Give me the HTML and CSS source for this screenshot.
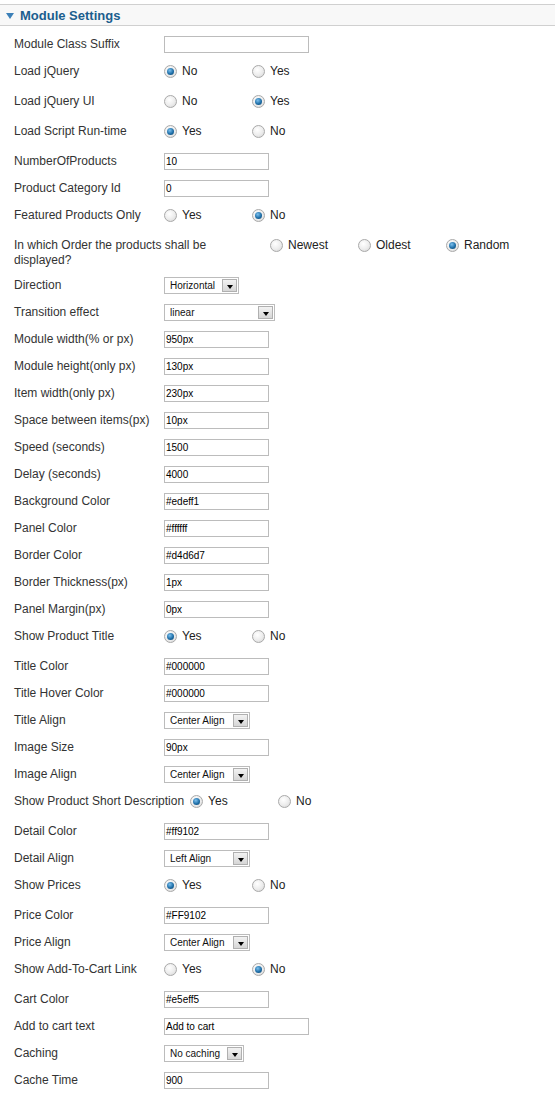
FILE: index.html
```html
<!DOCTYPE html>
<html>
<head>
<meta charset="utf-8">
<link rel="stylesheet" href="styles.css">
</head>
<body>
<div class="panel">
  <div class="head"><span class="tri"></span><span class="title">Module Settings</span></div>
  <div class="list">
    <div class="row"><span class="key">Module Class Suffix</span><span class="inp wide"></span></div>
    <div class="row r"><span class="key">Load jQuery</span><span class="opt"><i class="rd on"></i>No</span><span class="opt"><i class="rd"></i>Yes</span></div>
    <div class="row r"><span class="key">Load jQuery UI</span><span class="opt"><i class="rd"></i>No</span><span class="opt"><i class="rd on"></i>Yes</span></div>
    <div class="row r"><span class="key">Load Script Run-time</span><span class="opt"><i class="rd on"></i>Yes</span><span class="opt"><i class="rd"></i>No</span></div>
    <div class="row"><span class="key">NumberOfProducts</span><span class="inp">10</span></div>
    <div class="row"><span class="key">Product Category Id</span><span class="inp">0</span></div>
    <div class="row r"><span class="key">Featured Products Only</span><span class="opt"><i class="rd"></i>Yes</span><span class="opt"><i class="rd on"></i>No</span></div>
    <div class="row order"><span class="key">In which Order the products shall be displayed?</span><span class="opts"><span class="opt"><i class="rd"></i>Newest</span><span class="opt"><i class="rd"></i>Oldest</span><span class="opt"><i class="rd on"></i>Random</span></span></div>
    <div class="row"><span class="key">Direction</span><span class="sel w75"><span class="val">Horizontal</span><span class="arr"></span></span></div>
    <div class="row"><span class="key">Transition effect</span><span class="sel w111"><span class="val">linear</span><span class="arr"></span></span></div>
    <div class="row"><span class="key">Module width(% or px)</span><span class="inp">950px</span></div>
    <div class="row"><span class="key">Module height(only px)</span><span class="inp">130px</span></div>
    <div class="row"><span class="key">Item width(only px)</span><span class="inp">230px</span></div>
    <div class="row"><span class="key">Space between items(px)</span><span class="inp">10px</span></div>
    <div class="row"><span class="key">Speed (seconds)</span><span class="inp">1500</span></div>
    <div class="row"><span class="key">Delay (seconds)</span><span class="inp">4000</span></div>
    <div class="row"><span class="key">Background Color</span><span class="inp">#edeff1</span></div>
    <div class="row"><span class="key">Panel Color</span><span class="inp">#ffffff</span></div>
    <div class="row"><span class="key">Border Color</span><span class="inp">#d4d6d7</span></div>
    <div class="row"><span class="key">Border Thickness(px)</span><span class="inp">1px</span></div>
    <div class="row"><span class="key">Panel Margin(px)</span><span class="inp">0px</span></div>
    <div class="row r"><span class="key">Show Product Title</span><span class="opt"><i class="rd on"></i>Yes</span><span class="opt"><i class="rd"></i>No</span></div>
    <div class="row"><span class="key">Title Color</span><span class="inp">#000000</span></div>
    <div class="row"><span class="key">Title Hover Color</span><span class="inp">#000000</span></div>
    <div class="row"><span class="key">Title Align</span><span class="sel w86"><span class="val">Center Align</span><span class="arr"></span></span></div>
    <div class="row"><span class="key">Image Size</span><span class="inp">90px</span></div>
    <div class="row"><span class="key">Image Align</span><span class="sel w86"><span class="val">Center Align</span><span class="arr"></span></span></div>
    <div class="row r"><span class="key">Show Product Short Description</span><span class="opt"><i class="rd on"></i>Yes</span><span class="opt"><i class="rd"></i>No</span></div>
    <div class="row"><span class="key">Detail Color</span><span class="inp">#ff9102</span></div>
    <div class="row"><span class="key">Detail Align</span><span class="sel w86"><span class="val">Left Align</span><span class="arr"></span></span></div>
    <div class="row r"><span class="key">Show Prices</span><span class="opt"><i class="rd on"></i>Yes</span><span class="opt"><i class="rd"></i>No</span></div>
    <div class="row"><span class="key">Price Color</span><span class="inp">#FF9102</span></div>
    <div class="row"><span class="key">Price Align</span><span class="sel w86"><span class="val">Center Align</span><span class="arr"></span></span></div>
    <div class="row r"><span class="key">Show Add-To-Cart Link</span><span class="opt"><i class="rd"></i>Yes</span><span class="opt"><i class="rd on"></i>No</span></div>
    <div class="row"><span class="key">Cart Color</span><span class="inp">#e5eff5</span></div>
    <div class="row"><span class="key">Add to cart text</span><span class="inp wide">Add to cart</span></div>
    <div class="row"><span class="key">Caching</span><span class="sel w80"><span class="val">No caching</span><span class="arr"></span></span></div>
    <div class="row"><span class="key">Cache Time</span><span class="inp">900</span></div>
  </div>
</div>
</body>
</html>
```
FILE: styles.css
```css
html, body {
  margin: 0;
  padding: 0;
  background: #fff;
}
body {
  font-family: "Liberation Sans", Arial, sans-serif;
  font-size: 12px;
  color: #333;
}
.panel {
  padding-top: 4px;
}
.head {
  height: 20px;
  border-top: 1px solid #d0d0d0;
  border-bottom: 1px solid #d0d0d0;
  background: #f8f8f8;
  display: flex;
  align-items: center;
  padding-left: 6px;
}
.tri {
  width: 0;
  height: 0;
  border-left: 4px solid transparent;
  border-right: 4px solid transparent;
  border-top: 6px solid #3c80b8;
  margin-right: 6px;
  margin-top: 1px;
}
.title {
  font-weight: bold;
  font-size: 13px;
  color: #1b5e8e;
}
.list {
  padding-top: 5px;
  padding-left: 14px;
}
.row {
  display: flex;
  align-items: center;
  height: 27px;
  box-sizing: border-box;
  line-height: 15px;
}
.row.r {
  height: 30px;
  padding-bottom: 3px;
}
.key {
  min-width: 150px;
  padding-right: 6px;
  box-sizing: border-box;
  white-space: nowrap;
}
.row.order {
  height: 40px;
  align-items: flex-start;
  padding-top: 6px;
}
.row.order .key {
  width: 256px;
  white-space: normal;
  padding-right: 40px;
}
.opts {
  display: flex;
}
.opt {
  width: 88px;
  display: flex;
  align-items: center;
  color: #222;
}
.rd {
  width: 11px;
  height: 11px;
  border-radius: 50%;
  border: 1px solid #a9a9a9;
  background: radial-gradient(circle at 40% 35%, #ffffff 0%, #ececec 55%, #d2d2d2 100%);
  margin-right: 5px;
  position: relative;
  flex: none;
}
.rd.on::after {
  content: "";
  position: absolute;
  left: 2px;
  top: 2px;
  width: 7px;
  height: 7px;
  border-radius: 50%;
  background: radial-gradient(circle at 40% 35%, #7cc0ee 0%, #1f6fa8 55%, #0d3f66 100%);
}
.inp {
  width: 105px;
  height: 17px;
  box-sizing: border-box;
  border: 1px solid #bcbcbc;
  font-size: 10px;
  color: #000;
  line-height: 15px;
  padding-left: 1px;
  background: #fff;
}
.inp.wide {
  width: 145px;
}
.sel {
  height: 17px;
  box-sizing: border-box;
  border: 1px solid #bcbcbc;
  display: flex;
  align-items: center;
  justify-content: space-between;
  font-size: 10px;
  color: #111;
  background: #fff;
}
.w75 { width: 75px; }
.w80 { width: 80px; }
.w86 { width: 86px; }
.w111 { width: 111px; }
.val {
  padding-left: 5px;
  white-space: nowrap;
}
.arr {
  width: 15px;
  height: 13px;
  box-sizing: border-box;
  border: 1px solid #b0b0b0;
  background: linear-gradient(#f2f2f2, #d6d6d6);
  margin-right: 1px;
  display: flex;
  align-items: center;
  justify-content: center;
}
.arr::after {
  content: "";
  width: 0;
  height: 0;
  border-left: 3.5px solid transparent;
  border-right: 3.5px solid transparent;
  border-top: 4px solid #000;
  margin-top: 2px;
}
```
